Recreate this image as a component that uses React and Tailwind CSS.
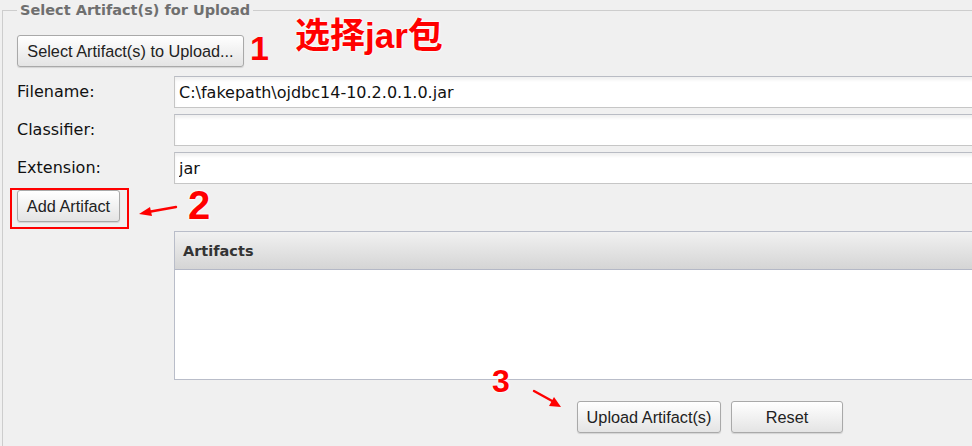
import React from 'react'

const btn =
  'h-[32px] rounded-[3px] border border-[#a9a9a9] bg-gradient-to-b from-[#ffffff] to-[#e4e4e4] shadow-[0_1px_1px_rgba(0,0,0,0.12)] text-[16.3px] text-[#222] font-["Liberation_Sans",Arial,sans-serif] leading-none'

const field =
  'h-[32px] w-[820px] border border-[#c6c6c6] border-t-[#b9bcc4] bg-white shadow-[inset_0_3px_3px_rgba(0,0,0,0.06)] pl-[4px] text-[16px] text-[#111] font-["DejaVu_Sans",sans-serif] outline-none'

function Row({ label, value }) {
  return (
    <div className="flex items-center h-[32px]">
      <label className="w-[157px] text-[16px] text-[#111] font-['DejaVu_Sans',sans-serif]">{label}</label>
      <input className={field} readOnly defaultValue={value} />
    </div>
  )
}

export default function App() {
  const outline = '[text-shadow:0_0_2px_#fff,0_0_2px_#fff,0_0_3px_#fff]'
  return (
    <div className="relative w-[972px] h-[446px] overflow-hidden bg-[#f0f0f0]">
      <fieldset className="ml-[2px] w-[1010px] h-[480px] border border-[#cdcdcd] pl-[14px]">
        <legend className="px-[3px] text-[14.5px] font-bold text-[#6f6f6f] font-['DejaVu_Sans',sans-serif] leading-[20px]">
          Select Artifact(s) for Upload
        </legend>

        <div className="pt-[15px]">
          <button className={`${btn} w-[227px]`}>Select Artifact(s) to Upload...</button>
        </div>

        <div className="mt-[9px] flex flex-col gap-[6px]">
          <Row label="Filename:" value="C:\fakepath\ojdbc14-10.2.0.1.0.jar" />
          <Row label="Classifier:" value="" />
          <Row label="Extension:" value="jar" />
        </div>

        <div className="mt-[6px]">
          <button className={`${btn} w-[103px] h-[31px]`}>Add Artifact</button>
        </div>

        {/* Artifacts grid */}
        <div className="ml-[157px] mt-[9px] w-[820px] border border-[#b9bdc9]">
          <div className="h-[38px] flex items-center pl-[8px] pt-[2px] bg-gradient-to-b from-[#f1f1f1] to-[#d5d5d5] border-b border-[#b4b8c6] text-[14.5px] font-bold text-[#333] font-['DejaVu_Sans',sans-serif]">
            Artifacts
          </div>
          <div className="h-[109px] bg-white" />
        </div>

        <div className="mt-[21px] ml-[560px] flex gap-[10px]">
          <button className={`${btn} w-[144px]`}>Upload Artifact(s)</button>
          <button className={`${btn} w-[112px]`}>Reset</button>
        </div>
      </fieldset>

      {/* annotations */}
      <div className="absolute left-[250px] top-[28px] text-[34px] font-bold text-[#ff0000] font-['Liberation_Sans',sans-serif] leading-[40px]">
        1
      </div>
      <div className={`absolute left-[295px] top-[13px] text-[35px] font-bold text-[#ff0000] font-['Liberation_Sans','Noto_Sans_CJK_SC',sans-serif] leading-[46px] ${outline}`}>
        选择jar包
      </div>

      <div className="absolute left-[10px] top-[188px] w-[119px] h-[41px] border-2 border-[#ff0000]" />
      <svg className="absolute left-[136px] top-[200px]" width="44" height="20" viewBox="0 0 44 20">
        <line x1="40" y1="7" x2="12" y2="12" stroke="#ff0000" strokeWidth="2.4" strokeLinecap="round" />
        <polygon points="3,14 14,7 16,16" fill="#ff0000" />
      </svg>
      <div className={`absolute left-[188px] top-[182px] text-[40px] font-bold text-[#ff0000] font-['Liberation_Sans',sans-serif] leading-[46px] ${outline}`}>
        2
      </div>

      <div className={`absolute left-[492px] top-[362px] text-[32px] font-bold text-[#ff0000] font-['Liberation_Sans',sans-serif] leading-[38px] ${outline}`}>
        3
      </div>
      <svg className="absolute left-[530px] top-[386px]" width="36" height="28" viewBox="0 0 36 28">
        <line x1="4" y1="5" x2="24" y2="16" stroke="#ff0000" strokeWidth="2.4" strokeLinecap="round" />
        <polygon points="31,21 19,20 24,11" fill="#ff0000" />
      </svg>
    </div>
  )
}
